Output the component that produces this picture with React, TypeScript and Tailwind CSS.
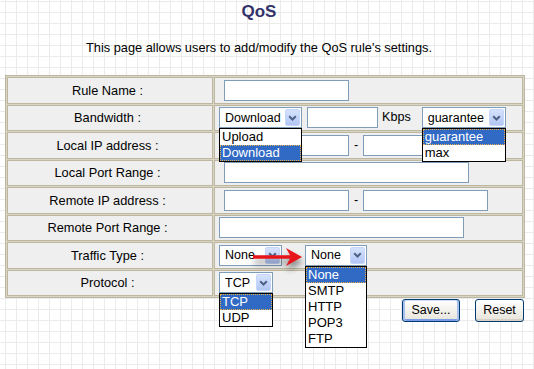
import React from "react";

const font = "font-['Liberation_Sans',Arial,sans-serif]";

const Chevron = () => (
  <svg width="9" height="6" viewBox="0 0 9 6">
    <path d="M1.2 1.2 L4.5 4.5 L7.8 1.2" fill="none" stroke="#4d6185" strokeWidth="2" />
  </svg>
);

interface SelectProps {
  value: string;
  className: string;
  options?: string[];
}

const Select = ({ value, className, options }: SelectProps) => (
  <div className={`relative flex h-[21px] shrink-0 items-center border border-[#7f9db9] bg-white ${className}`}>
    <span className="flex-1 pl-[5px] text-[12.5px] leading-none text-black">{value}</span>
    <span className="mr-px flex h-[17px] w-[15px] items-center justify-center rounded-[2px] border border-[#c5d5fb] bg-linear-to-b from-[#d6e2fd] to-[#b2c6f5]">
      <Chevron />
    </span>
    {options && (
      <ul className="absolute -left-px -right-px top-[20px] z-10 border border-black bg-white">
        {options.map((o) => (
          <li
            key={o}
            className={`h-4 px-[2px] text-[13px] leading-4 ${
              o === value
                ? "bg-[#316ac5] text-white outline-1 -outline-offset-1 outline-dotted outline-[#eab14d]"
                : "text-black"
            }`}
          >
            {o}
          </li>
        ))}
      </ul>
    )}
  </div>
);

const Input = ({ className }: { className: string }) => (
  <input type="text" className={`h-[21px] shrink-0 border border-[#7f9db9] bg-white ${className}`} />
);

const rows: { label: string; field: React.ReactNode }[] = [
  { label: "Rule Name :", field: <Input className="ml-[5px] w-[125px]" /> },
  {
    label: "Bandwidth :",
    field: (
      <>
        <Select value="Download" className="w-[83px]" options={["Upload", "Download"]} />
        <Input className="ml-[5px] w-[71px]" />
        <span className="ml-[4px] text-[12.6px]">Kbps</span>
        <Select value="guarantee" className="ml-[11px] w-[84px]" options={["guarantee", "max"]} />
      </>
    ),
  },
  {
    label: "Local IP address :",
    field: (
      <>
        <Input className="ml-[5px] w-[125px]" />
        <span className="mx-[5px] text-[12.6px]">-</span>
        <Input className="w-[125px]" />
      </>
    ),
  },
  { label: "Local Port Range :", field: <Input className="ml-[5px] w-[245px]" /> },
  {
    label: "Remote IP address :",
    field: (
      <>
        <Input className="ml-[5px] w-[125px]" />
        <span className="mx-[5px] text-[12.6px]">-</span>
        <Input className="w-[125px]" />
      </>
    ),
  },
  { label: "Remote Port Range :", field: <Input className="w-[245px]" /> },
  {
    label: "Traffic Type :",
    field: (
      <>
        <Select value="None" className="w-[63px]" />
        <Select value="None" className="ml-[23px] w-[62px]" options={["None", "SMTP", "HTTP", "POP3", "FTP"]} />
      </>
    ),
  },
  {
    label: "Protocol :",
    field: <Select value="TCP" className="w-[54px]" options={["TCP", "UDP"]} />,
  },
];

const App = () => {
  return (
    <div
      className={`relative h-[369px] w-[534px] overflow-hidden bg-white bg-[linear-gradient(to_right,#ebebeb_1px,transparent_1px),linear-gradient(to_bottom,#ebebeb_1px,transparent_1px)] bg-size-[11px_11px] bg-position-[5px_1px] text-black ${font}`}
    >
      <h1 className="w-[518px] pt-[2px] text-center text-[17px] font-bold leading-[20px] text-[#33336a]">QoS</h1>
      <p className="mt-[18px] w-[518px] text-center text-[12.8px] leading-[15px]">
        This page allows users to add/modify the QoS rule's settings.
      </p>

      <table className="ml-[5px] mt-[20px] w-[520px] border-separate border-spacing-[1px] border border-[#bdb7a0] bg-[#d9d5c5]">
        <tbody>
          {rows.map((r) => (
            <tr key={r.label}>
              <td className="h-[26.5px] w-[206px] border border-[#bdb7a0] bg-[#efefef] pr-[5px] text-center text-[12.8px]">
                {r.label}
              </td>
              <td className="h-[26.5px] border border-[#bdb7a0] bg-[#efefef] pl-[4px]">
                <div className="flex items-center">{r.field}</div>
              </td>
            </tr>
          ))}
        </tbody>
      </table>

      <div className="mt-px flex justify-end gap-[15px] pr-[10px]">
        <button className="h-[23px] w-[58px] rounded-[3px] border border-[#003c74] bg-linear-to-b from-white to-[#e6e4da] text-[12.5px] shadow-[inset_2px_0_0_#a8c0ee,inset_-2px_0_0_#a8c0ee,inset_0_1px_0_#cfe0fc,inset_0_-2px_0_#7b9be6]">
          Save...
        </button>
        <button className="h-[23px] w-[49px] rounded-[3px] border border-[#003c74] bg-linear-to-b from-white to-[#e6e4da] text-[12.5px] shadow-[inset_0_-2px_0_#d6d0c5]">
          Reset
        </button>
      </div>

      <svg
        className="absolute left-[250px] top-[246px] z-20 drop-shadow-[1px_5px_3px_rgba(0,0,0,0.45)]"
        width="56"
        height="22"
        viewBox="0 0 56 22"
      >
        <path d="M3 9.3 L40 9.3 L36 2 L52 11 L36 20 L40 12.7 L3 12.7 Z" fill="#e8141b" />
      </svg>
    </div>
  );
};

export default App;
